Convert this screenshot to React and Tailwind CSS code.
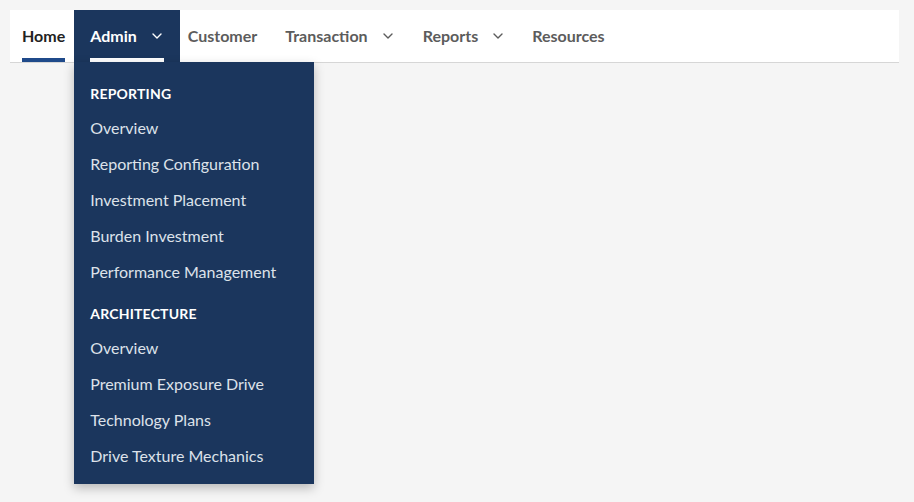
import React from 'react';

const Chevron = ({ className = '' }) => (
  <svg viewBox="0 0 10 6" className={`w-[10px] h-[6px] ${className}`} fill="none" stroke="currentColor" strokeWidth="1.4" strokeLinecap="round" strokeLinejoin="round">
    <path d="M1 1l4 4 4-4" />
  </svg>
);

const menu = [
  {
    title: 'Reporting',
    items: ['Overview', 'Reporting Configuration', 'Investment Placement', 'Burden Investment', 'Performance Management'],
  },
  {
    title: 'Architecture',
    items: ['Overview', 'Premium Exposure Drive', 'Technology Plans', 'Drive Texture Mechanics'],
  },
];

const App = () => {
  return (
    <div className="min-h-[502px] bg-[#f5f5f5] pt-[10px] pl-[10px]" style={{ fontFamily: 'Lato, "Source Sans Pro", sans-serif' }}>
      <nav className="w-[889px] h-[53px] bg-white border-b border-[#d6d6d6]">
        <ul className="flex h-[52px] text-[16px] font-bold">
          <li className="relative flex items-center pl-3 pr-[9px] text-[#222222]">
            <span>Home</span>
            <span className="absolute left-3 right-[9px] bottom-0 h-1 bg-[#1f4a8a]" />
          </li>
          <li className="relative flex items-center px-4 bg-[#1b365d] text-white">
            <span>Admin</span>
            <Chevron className="ml-[15px] mr-[2px]" />
            <span className="absolute left-4 right-4 bottom-0 h-1 bg-white" />
            <div className="absolute left-0 top-full w-[240px] bg-[#1b365d] pt-2 pb-[10px] shadow-[0_4px_10px_rgba(0,0,0,0.25)] z-10">
              {menu.map((section) => (
                <div key={section.title} className="pt-[14px]">
                  <div className="px-4 h-5 leading-5 mb-[6px] text-[14px] font-bold uppercase text-white tracking-[0.2px]">
                    {section.title}
                  </div>
                  <ul>
                    {section.items.map((item) => (
                      <li key={item} className="px-4 h-9 leading-9 text-[16px] font-normal text-[#dde2ea] whitespace-nowrap">
                        {item}
                      </li>
                    ))}
                  </ul>
                </div>
              ))}
            </div>
          </li>
          <li className="flex items-center pl-2 pr-4 text-[#5c5c5c]">Customer</li>
          <li className="flex items-center pl-3 pr-[15px] text-[#5c5c5c]">
            <span>Transaction</span>
            <Chevron className="ml-[15px] mr-[3px]" />
          </li>
          <li className="flex items-center pl-3 pr-[14px] text-[#5c5c5c]">
            <span>Reports</span>
            <Chevron className="ml-[15px] mr-[3px]" />
          </li>
          <li className="flex items-center px-3 text-[#5c5c5c]">Resources</li>
        </ul>
      </nav>
    </div>
  );
};

export default App;
